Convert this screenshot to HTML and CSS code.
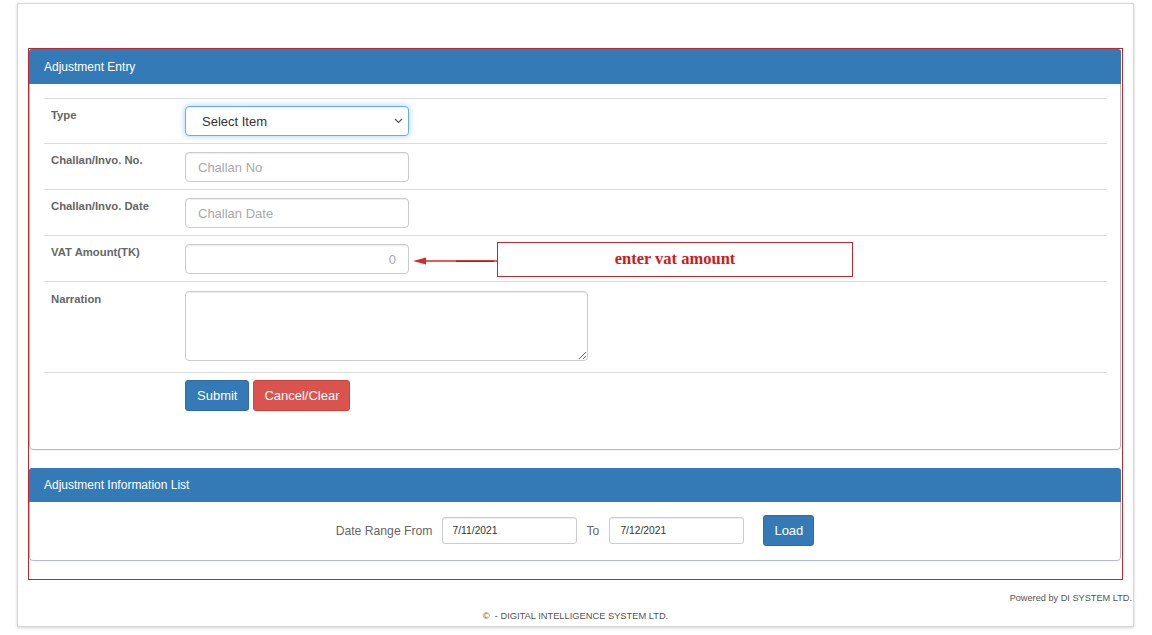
FILE: index.html
```html
<!DOCTYPE html>
<html>
<head>
<meta charset="utf-8">
<title>Adjustment Entry</title>
<link rel="stylesheet" href="styles.css">
</head>
<body>
<div class="page">
  <div class="redbox">
    <div class="panel panel-entry">
      <div class="panel-heading">Adjustment Entry</div>
      <div class="panel-body">
        <div class="frow first">
          <div class="flabel">Type</div>
          <div class="fctrl">
            <div class="selwrap">
              <select class="fselect">
                <option>Select Item</option>
              </select>
              <svg class="chev" width="9" height="6" viewBox="0 0 9 6"><path d="M1 1 L4.5 4.5 L8 1" fill="none" stroke="#555" stroke-width="1.2"/></svg>
            </div>
          </div>
        </div>
        <div class="frow">
          <div class="flabel">Challan/Invo. No.</div>
          <div class="fctrl"><input class="finput" type="text" placeholder="Challan No"></div>
        </div>
        <div class="frow">
          <div class="flabel">Challan/Invo. Date</div>
          <div class="fctrl"><input class="finput" type="text" placeholder="Challan Date"></div>
        </div>
        <div class="frow">
          <div class="flabel">VAT Amount(TK)</div>
          <div class="fctrl"><input class="finput num" type="text" placeholder="0"></div>
        </div>
        <div class="frow narr">
          <div class="flabel">Narration</div>
          <div class="fctrl"><textarea class="ftext"></textarea></div>
        </div>
        <div class="frow btnrow">
          <div class="flabel"></div>
          <div class="fctrl btns">
            <button class="btn btn-primary">Submit</button>
            <button class="btn btn-danger">Cancel/Clear</button>
          </div>
        </div>
      </div>
    </div>
    <div class="panel panel-list">
      <div class="panel-heading small">Adjustment Information List</div>
      <div class="panel-body range">
        <span class="rlabel">Date Range From</span>
        <input class="dinput" type="text" value="7/11/2021">
        <span class="rlabel to">To</span>
        <input class="dinput" type="text" value="7/12/2021">
        <button class="btn btn-primary load">Load</button>
      </div>
    </div>
  </div>
  <div class="powered">Powered by DI SYSTEM LTD.</div>
  <div class="copy">&copy;&nbsp; - DIGITAL INTELLIGENCE SYSTEM LTD.</div>
</div>

<svg class="arrow" width="90" height="14" viewBox="0 0 90 14">
  <line x1="12" y1="7" x2="87" y2="7" stroke="#d42a2a" stroke-width="1.6"/>
  <line x1="46" y1="7.2" x2="84" y2="7.2" stroke="#b81c1c" stroke-width="1.4"/>
  <polygon points="3,7 16,3.6 16,10.4" fill="#d42a2a"/>
</svg>
<div class="callout">enter vat amount</div>
</body>
</html>
```
FILE: styles.css
```css
* { box-sizing: border-box; }

body {
  margin: 0;
  background: #ffffff;
  font-family: "Liberation Sans", Arial, sans-serif;
  color: #333;
  position: relative;
  width: 1152px;
  height: 635px;
  overflow: hidden;
}

.page {
  margin: 3px 0 0 17px;
  width: 1117px;
  height: 624px;
  border: 1px solid #d6d6d6;
  box-shadow: 0 1px 3px rgba(0, 0, 0, 0.18);
  padding: 44px 10px 0 10px;
  background: #fff;
}

.redbox {
  width: 1095px;
  border: 1px solid #c3262c;
  padding-right: 1px;
}

.panel {
  border: 1px solid #b9bcc0;
  border-radius: 4px;
  margin-bottom: 18px;
  background: #fff;
  box-shadow: 0 1px 1px rgba(0, 0, 0, 0.05);
}

.panel-heading {
  margin: -1px -1px 0 -1px;
  height: 35px;
  padding: 0 15px;
  display: flex;
  align-items: center;
  background: #337ab7;
  color: #fff;
  font-size: 12px;
  border-radius: 3px 3px 0 0;
}

.panel-heading.small {
  height: 34px;
}

.panel-entry .panel-body {
  padding: 14px 13px 38px 14px;
}

.frow {
  display: grid;
  grid-template-columns: 141px 1fr;
  border-top: 1px solid #dddddd;
  padding: 8px 0 7px 0;
}

.frow.first {
  padding-top: 7px;
}

.frow.narr {
  padding: 9px 0 11px 0;
}

.frow.btnrow {
  padding: 7px 0 0 0;
}

.flabel {
  padding: 1px 0 0 7px;
  font-size: 11.3px;
  line-height: 14px;
  font-weight: bold;
  color: #666;
}

.frow.first .flabel {
  padding-top: 2px;
}

.fctrl {
  display: flex;
}

.selwrap {
  position: relative;
  width: 224px;
  height: 30px;
}

.chev {
  position: absolute;
  right: 6px;
  top: 12px;
  pointer-events: none;
}

.fselect,
.finput {
  width: 224px;
  height: 30px;
  border: 1px solid #cccccc;
  border-radius: 4px;
  font-family: "Liberation Sans", Arial, sans-serif;
  font-size: 13px;
  color: #333;
  background: #fff;
  box-shadow: inset 0 1px 1px rgba(0, 0, 0, 0.075);
  padding: 0 12px;
  outline: none;
  margin: 0;
}

.fselect {
  appearance: none;
  -webkit-appearance: none;
  border-color: #66afe9;
  box-shadow: inset 0 1px 1px rgba(0, 0, 0, 0.075), 0 0 6px rgba(102, 175, 233, 0.6);
  padding-left: 16px;
  padding-right: 20px;
}

.finput::placeholder {
  color: #a9a9a9;
}

.finput.num {
  text-align: right;
}

.ftext {
  width: 403px;
  height: 70px;
  border: 1px solid #cccccc;
  border-radius: 4px;
  box-shadow: inset 0 1px 1px rgba(0, 0, 0, 0.075);
  margin: 0;
  resize: both;
  font-family: "Liberation Sans", Arial, sans-serif;
}

.btns {
  gap: 4px;
}

.btn {
  height: 31px;
  padding: 0 11px;
  border: 1px solid transparent;
  border-radius: 3px;
  font-family: "Liberation Sans", Arial, sans-serif;
  font-size: 13px;
  color: #fff;
  cursor: pointer;
  margin: 0;
}

.btn-primary {
  background: #337ab7;
  border-color: #2e6da4;
}

.btn-danger {
  background: #d9534f;
  border-color: #d43f3a;
  width: 97px;
  padding: 0;
}

.panel-list .panel-body {
  height: 58px;
  padding: 0 15px 1px 15px;
  display: flex;
  align-items: center;
  justify-content: center;
}

.rlabel {
  font-size: 12.2px;
  color: #666;
  margin-right: 9px;
}

.rlabel.to {
  margin-left: 10px;
  margin-right: 10px;
}

.dinput {
  width: 135px;
  height: 27px;
  border: 1px solid #cccccc;
  border-radius: 3px;
  padding: 0 10px;
  font-family: "Liberation Sans", Arial, sans-serif;
  font-size: 10.3px;
  color: #333;
  box-shadow: inset 0 1px 1px rgba(0, 0, 0, 0.075);
  margin: 0;
  outline: none;
}

.load {
  width: 51px;
  margin-left: 19px;
  padding: 0;
}

.powered {
  margin-top: 12px;
  text-align: right;
  font-size: 9.2px;
  line-height: 12px;
  color: #555;
  margin-right: -9px;
}

.copy {
  margin-top: 6px;
  text-align: center;
  font-size: 9.3px;
  line-height: 12px;
  color: #555;
}

.arrow {
  position: absolute;
  left: 410px;
  top: 254px;
}

.callout {
  position: absolute;
  left: 497px;
  top: 242px;
  width: 356px;
  height: 35px;
  border: 1px solid #c3262c;
  background: #fff;
  display: flex;
  align-items: center;
  justify-content: center;
  font-family: "Liberation Serif", "Times New Roman", serif;
  font-weight: bold;
  font-size: 16.5px;
  color: #d01a1a;
  padding-bottom: 2px;
}
```
